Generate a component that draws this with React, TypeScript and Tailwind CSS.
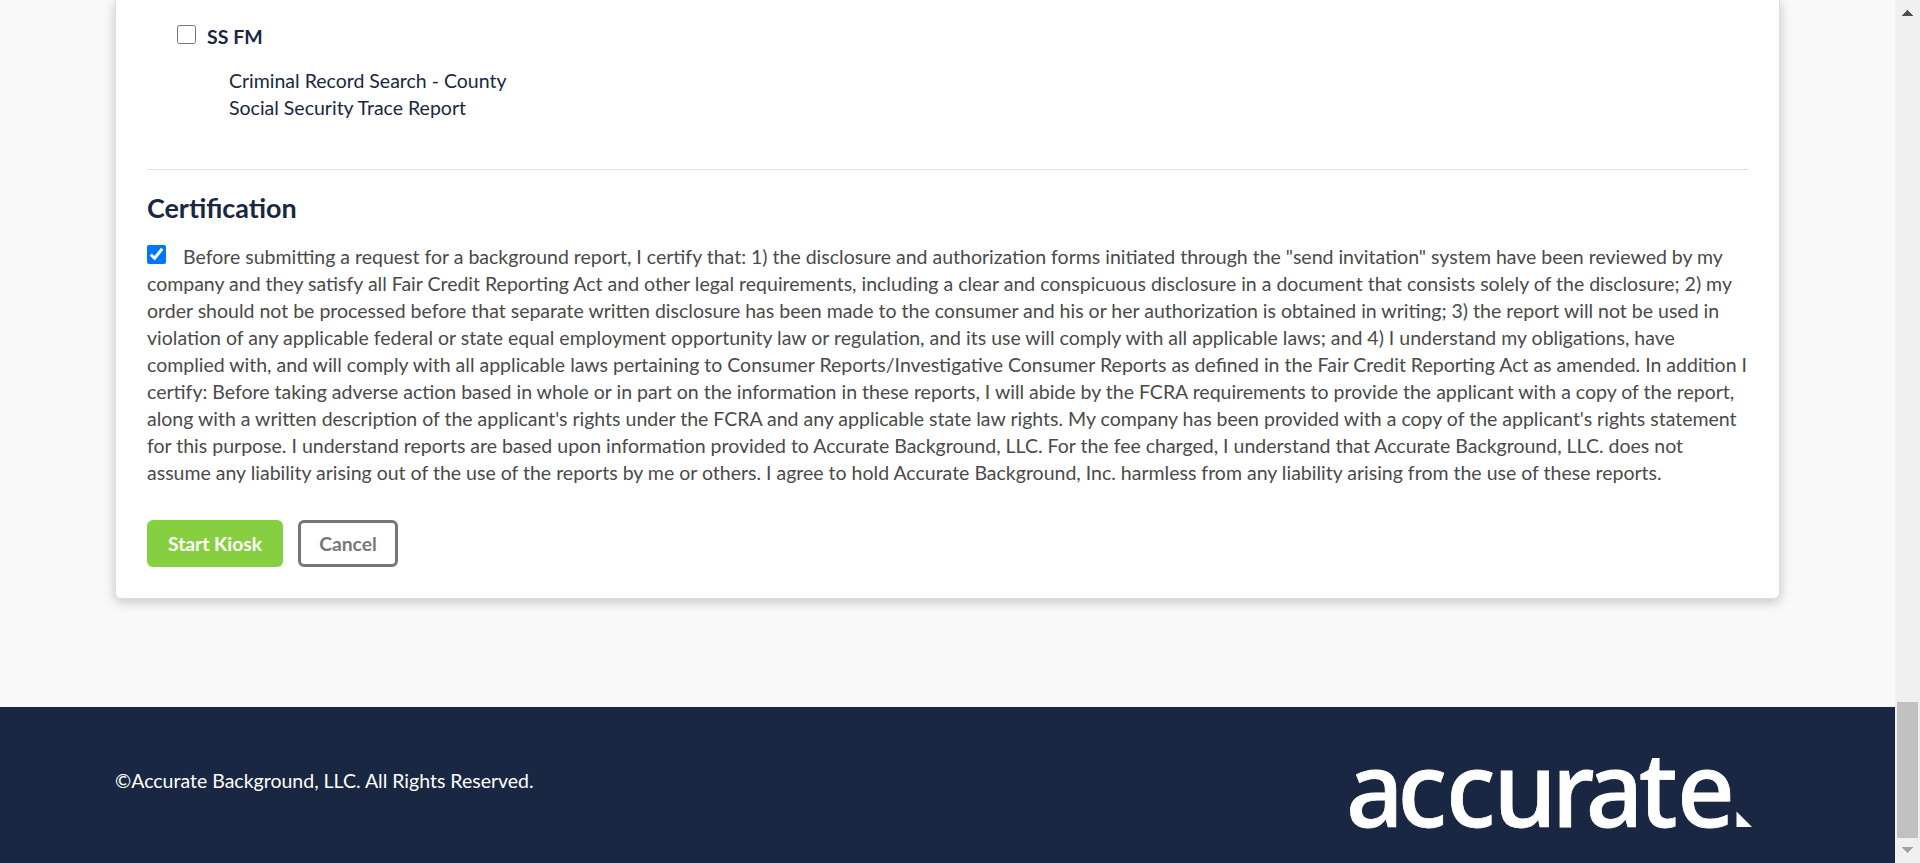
const certificationLines = [
  'company and they satisfy all Fair Credit Reporting Act and other legal requirements, including a clear and conspicuous disclosure in a document that consists solely of the disclosure; 2) my',
  'order should not be processed before that separate written disclosure has been made to the consumer and his or her authorization is obtained in writing; 3) the report will not be used in',
  'violation of any applicable federal or state equal employment opportunity law or regulation, and its use will comply with all applicable laws; and 4) I understand my obligations, have',
  'complied with, and will comply with all applicable laws pertaining to Consumer Reports/Investigative Consumer Reports as defined in the Fair Credit Reporting Act as amended. In addition I',
  'certify: Before taking adverse action based in whole or in part on the information in these reports, I will abide by the FCRA requirements to provide the applicant with a copy of the report,',
  "along with a written description of the applicant's rights under the FCRA and any applicable state law rights. My company has been provided with a copy of the applicant's rights statement",
  'for this purpose. I understand reports are based upon information provided to Accurate Background, LLC. For the fee charged, I understand that Accurate Background, LLC. does not',
  'assume any liability arising out of the use of the reports by me or others. I agree to hold Accurate Background, Inc. harmless from any liability arising from the use of these reports.',
];

function Logo() {
  return (
    <svg width="414" height="144" viewBox="-10 0 414 144" role="img" aria-label="accurate">
      <text
        transform="scale(0.97 1)"
        x="-4 49 99 148 208 243 298 337"
        y="112"
        fill="#fff"
        stroke="#fff"
        strokeWidth="0.8"
        fontSize="104"
        fontWeight="500"
        className="font-['Noto_Sans',sans-serif]"
      >
        accurate
      </text>
      <path d="M386.5 96.5 402 112H386.5Z" fill="#fff" />
    </svg>
  );
}

function Scrollbar() {
  return (
    <div className="flex h-full w-[25px] shrink-0 flex-col items-center bg-[#f0f0f0]">
      <svg width="11" height="6" viewBox="0 0 11 6" className="mt-[10px] shrink-0" shapeRendering="crispEdges">
        <path d="M5.5 0 11 5.5V6H0V5.5Z" fill="#505050" />
      </svg>
      <div className="mt-auto h-[136px] w-[21px] shrink-0 bg-[#c1c1c1]" />
      <svg width="11" height="6" viewBox="0 0 11 6" className="mt-[9px] mb-[10px] shrink-0" shapeRendering="crispEdges">
        <path d="M0 0H11V.5L5.5 6 0 .5Z" fill="#a3a3a3" />
      </svg>
    </div>
  );
}

export default function App() {
  return (
    <div className="flex h-[863px] w-[1920px] overflow-hidden bg-[#f9f9f9] font-['Lato',sans-serif] text-[19.5px] leading-[27px] text-[#1a2742]">
      <div className="flex min-w-0 flex-1 flex-col">
        <main className="h-[707px] px-[115px]">
          <section className="h-[599px] rounded-b-[6px] border border-t-0 border-[#dfdfdf] bg-white px-[31px] pt-[23px] shadow-[0_3px_12px_rgba(0,0,0,0.22)]">
            <label className="ml-[30px] flex items-start">
              <input type="checkbox" className="mt-[2px] h-[19px] w-[19px]" />
              <span className="ml-[11px] font-bold">SS FM</span>
            </label>
            <ul className="mt-[17px] ml-[82px]">
              <li>Criminal Record Search - County</li>
              <li>Social Security Trace Report</li>
            </ul>
            <hr className="mt-[48px] border-[#e1e1e1]" />
            <h2 className="mt-[18px] text-[26.9px] leading-[40px] font-bold">Certification</h2>
            <div className="mt-[15px] whitespace-nowrap text-[#4a4a4a]">
              <label className="flex">
                <input type="checkbox" defaultChecked className="mt-[2px] mr-[17px] h-[19px] w-[19px]" />
                Before submitting a request for a background report, I certify that: 1) the disclosure and
                authorization forms initiated through the "send invitation" system have been reviewed by my
              </label>
              {certificationLines.map((line) => (
                <p key={line}>{line}</p>
              ))}
            </div>
            <div className="mt-[34px] flex gap-[15px] text-[19.25px] font-bold">
              <button className="h-[47px] w-[136px] rounded-[6px] bg-[#86cf40] text-white">Start Kiosk</button>
              <button className="h-[47px] w-[100px] rounded-[6px] border-[3px] border-[#777] text-[#777]">Cancel</button>
            </div>
          </section>
        </main>
        <footer className="flex h-[156px] items-start justify-between bg-[#1a2742] pr-[141px] pl-[115px] text-white">
          <p className="mt-[60px]">©Accurate Background, LLC. All Rights Reserved.</p>
          <div className="mt-[8px]">
            <Logo />
          </div>
        </footer>
      </div>
      <Scrollbar />
    </div>
  );
}
